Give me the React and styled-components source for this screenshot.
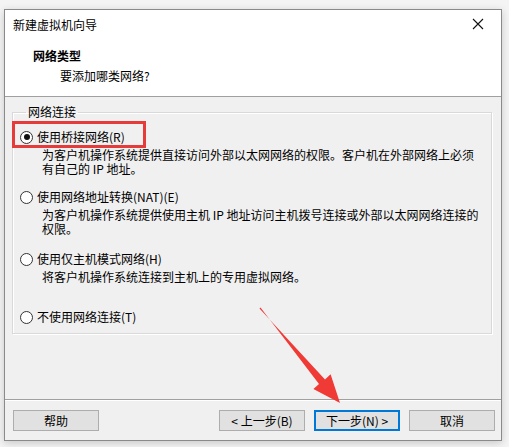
import React, { useState } from "react";
import styled, { createGlobalStyle } from "styled-components";

const GlobalStyle = createGlobalStyle`
  html, body {
    margin: 0;
    padding: 0;
    background: #f4f4f4;
  }
  body {
    font-family: "Noto Sans CJK SC", "Noto Sans", sans-serif;
    font-size: 12px;
    color: #000000;
  }
`;

const options = [
  {
    key: "bridge",
    label: "使用桥接网络(R)",
    desc: "为客户机操作系统提供直接访问外部以太网网络的权限。客户机在外部网络上必须\n有自己的 IP 地址。",
    top: 10,
  },
  {
    key: "nat",
    label: "使用网络地址转换(NAT)(E)",
    desc: "为客户机操作系统提供使用主机 IP 地址访问主机拨号连接或外部以太网网络连接的\n权限。",
    top: 13,
  },
  {
    key: "host",
    label: "使用仅主机模式网络(H)",
    desc: "将客户机操作系统连接到主机上的专用虚拟网络。",
    top: 15,
  },
  {
    key: "none",
    label: "不使用网络连接(T)",
    desc: "",
    top: 25,
  },
];

const App = () => {
  const [net, setNet] = useState("bridge");

  return (
    <Page>
      <GlobalStyle />
      <Window>
        <TitleBar>
          <TitleText>新建虚拟机向导</TitleText>
          <CloseBtn>
            <svg width="12" height="12" viewBox="0 0 12 12">
              <path d="M1 1 L11 11 M11 1 L1 11" stroke="#111" strokeWidth="1.1" />
            </svg>
          </CloseBtn>
        </TitleBar>
        <Header>
          <Heading>网络类型</Heading>
          <SubHeading>要添加哪类网络?</SubHeading>
        </Header>
        <Body>
          <Group>
            <Legend>网络连接</Legend>
            {options.map((o) => (
              <Option key={o.key} $top={o.top}>
                <OptionRow onClick={() => setNet(o.key)}>
                  <Radio $checked={net === o.key} />
                  <span>{o.label}</span>
                  {o.key === "bridge" && <RedBox />}
                </OptionRow>
                {o.desc && <Desc>{o.desc}</Desc>}
              </Option>
            ))}
          </Group>
        </Body>
        <Footer>
          <Button>帮助</Button>
          <Spacer />
          <Button>&lt; 上一步(B)</Button>
          <Button $default>下一步(N) &gt;</Button>
          <Button>取消</Button>
        </Footer>
      </Window>
      <Arrow width="509" height="447" viewBox="0 0 509 447">
        <polygon
          points="259.5,308.4 325,379.6 330.6,374.3 340,403 313.4,389 319,384.1 260.5,307.6"
          fill="#f03a36"
        />
      </Arrow>
    </Page>
  );
};

export default App;

const Page = styled.div`
  position: relative;
  width: 509px;
  height: 447px;
  padding: 9px 0 0 4px;
  box-sizing: border-box;
`;

const Window = styled.div`
  width: 498px;
  height: 432px;
  box-sizing: border-box;
  border: 1px solid #8a8a8a;
  background: #f0f0f0;
  display: flex;
  flex-direction: column;
  box-shadow: 0 2px 8px rgba(0, 0, 0, 0.18);
`;

const TitleBar = styled.div`
  height: 30px;
  background: #ffffff;
  display: flex;
  align-items: center;
  justify-content: space-between;
  padding: 0 0 0 8px;
`;

const TitleText = styled.span`
  font-size: 12px;
  line-height: 16px;
  margin-top: -1px;
`;

const CloseBtn = styled.div`
  width: 46px;
  height: 30px;
  display: flex;
  align-items: center;
  justify-content: center;
  margin-top: -2px;
`;

const Header = styled.div`
  background: #ffffff;
  padding: 8px 0 12px 28px;
  border-bottom: 1px solid #a0a0a0;
`;

const Heading = styled.div`
  font-weight: bold;
  font-size: 12px;
  line-height: 16px;
`;

const SubHeading = styled.div`
  font-size: 12px;
  line-height: 16px;
  margin: 4px 0 0 27px;
`;

const Body = styled.div`
  flex: 1;
  padding: 14px 9px 0 7px;
  border-bottom: 1px solid #a0a0a0;
  box-shadow: 0 1px 0 #ffffff;
`;

const Group = styled.fieldset`
  margin: -6px 0 0 0;
  height: 229px;
  box-sizing: border-box;
  border: 1px solid #d9d9d9;
  box-shadow: inset 1px 1px 0 #ffffff, 1px 1px 0 #ffffff;
  padding: 0 0 0 7px;
`;

const Legend = styled.legend`
  padding: 0 2px;
  margin-left: 6px;
  font-size: 12px;
  line-height: 14px;
`;

const Option = styled.div`
  margin-top: ${(p) => p.$top}px;
`;

const OptionRow = styled.label`
  position: relative;
  display: flex;
  align-items: center;
  gap: 4px;
  height: 16px;
  line-height: 16px;
  cursor: default;
`;

const Radio = styled.span`
  width: 11px;
  height: 11px;
  border: 1px solid #333333;
  border-radius: 50%;
  background: #ffffff;
  position: relative;
  flex-shrink: 0;
  &::after {
    content: "";
    display: ${(p) => (p.$checked ? "block" : "none")};
    position: absolute;
    left: 2.5px;
    top: 2.5px;
    width: 6px;
    height: 6px;
    border-radius: 50%;
    background: #111111;
  }
`;

const RedBox = styled.span`
  position: absolute;
  left: -8px;
  top: -8px;
  width: 128px;
  height: 21px;
  border: 3px solid #e63b3b;
  pointer-events: none;
`;

const Desc = styled.div`
  margin: 3px 0 0 22px;
  line-height: 14px;
  font-size: 12px;
  white-space: pre-line;
`;

const Footer = styled.div`
  height: 40px;
  display: flex;
  align-items: flex-start;
  gap: 9px;
  padding: 10px 6px 0 8px;
  box-sizing: border-box;
`;

const Spacer = styled.div`
  flex: 1;
`;

const Button = styled.button`
  width: 86px;
  height: 21px;
  box-sizing: border-box;
  font-family: "Noto Sans CJK SC", "Noto Sans", sans-serif;
  font-size: 12px;
  line-height: 14px;
  color: #000000;
  background: #e1e1e1;
  border: ${(p) => (p.$default ? "2px solid #0078d7" : "1px solid #adadad")};
  padding: 0;
  margin: 0;
`;

const Arrow = styled.svg`
  position: absolute;
  left: 0;
  top: 0;
  pointer-events: none;
`;
